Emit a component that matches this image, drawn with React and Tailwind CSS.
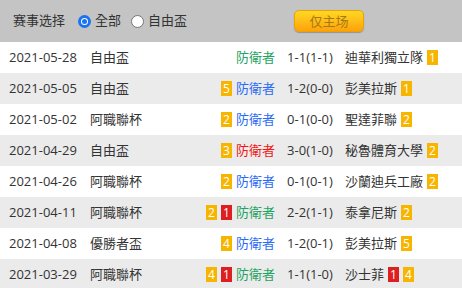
import React from 'react';

const rows = [
  { date: '2021-05-28', cup: '自由盃', hb: [], hc: 'text-[#1fa463]', score: '1-1(1-1)', away: '迪華利獨立隊', ab: [['y', '1']] },
  { date: '2021-05-05', cup: '自由盃', hb: [['y', '5']], hc: 'text-[#2b6cf5]', score: '1-2(0-0)', away: '彭美拉斯', ab: [['y', '1']] },
  { date: '2021-05-02', cup: '阿職聯杯', hb: [['y', '2']], hc: 'text-[#2b6cf5]', score: '0-1(0-0)', away: '聖達菲聯', ab: [['y', '2']] },
  { date: '2021-04-29', cup: '自由盃', hb: [['y', '3']], hc: 'text-[#f01818]', score: '3-0(1-0)', away: '秘魯體育大學', ab: [['y', '2']] },
  { date: '2021-04-26', cup: '阿職聯杯', hb: [['y', '2']], hc: 'text-[#2b6cf5]', score: '0-1(0-1)', away: '沙蘭迪兵工廠', ab: [['y', '2']] },
  { date: '2021-04-11', cup: '阿職聯杯', hb: [['y', '2'], ['r', '1']], hc: 'text-[#1fa463]', score: '2-2(1-1)', away: '泰拿尼斯', ab: [['y', '2']] },
  { date: '2021-04-08', cup: '優勝者盃', hb: [['y', '4']], hc: 'text-[#2b6cf5]', score: '1-2(0-1)', away: '彭美拉斯', ab: [['y', '5']] },
  { date: '2021-03-29', cup: '阿職聯杯', hb: [['y', '4'], ['r', '1']], hc: 'text-[#1fa463]', score: '1-1(1-0)', away: '沙士菲', ab: [['r', '1'], ['y', '4']] },
];

const Badge = ({ kind, n }) => (
  <span
    className={
      'inline-flex items-center justify-center w-[11px] h-[15px] text-[12px] leading-none text-white ' +
      (kind === 'r' ? 'bg-[#de1f1f]' : 'bg-[#f8b500]')
    }
  >
    {n}
  </span>
);

const Radio = ({ checked }) =>
  checked ? (
    <span className="w-[13px] h-[13px] rounded-full bg-[#1a73f0] flex items-center justify-center">
      <span className="w-[7px] h-[7px] rounded-full bg-white flex items-center justify-center">
        <span className="w-[5px] h-[5px] rounded-full bg-[#1a73f0]" />
      </span>
    </span>
  ) : (
    <span className="w-[13px] h-[13px] rounded-full bg-white border border-[#767676]" />
  );

export default function App() {
  return (
    <div className="w-[462px] h-[288px] overflow-hidden bg-white text-[13px] text-[#333] font-['Open_Sans','Noto_Sans_CJK_TC',sans-serif]">
      {/* filter bar */}
      <div className="h-[42px] bg-[#c4c4c4] flex items-center pl-[13px]">
        <span>赛事选择</span>
        <label className="flex items-center ml-[13px] gap-[4px]">
          <Radio checked />
          <span>全部</span>
        </label>
        <label className="flex items-center ml-[10px] gap-[4px]">
          <Radio />
          <span>自由盃</span>
        </label>
        <button className="ml-[107px] w-[70px] h-[22px] rounded-[5px] border border-[#eaa300] bg-gradient-to-b from-[#ffd823] to-[#ffa10a] text-[#a57a12] text-[13px] leading-none shadow-[0_1px_1px_rgba(0,0,0,0.25)]">
          仅主场
        </button>
      </div>

      {/* match list */}
      {rows.map((r, i) => (
        <div key={i} className={'h-[31px] flex items-center ' + (i % 2 ? 'bg-[#ebebeb]' : 'bg-white')}>
          <span className="ml-[9px] w-[81px]">{r.date}</span>
          <span>{r.cup}</span>
          <div className="flex-1 flex items-center justify-end gap-[4px]">
            {r.hb.map((b, j) => (
              <Badge key={j} kind={b[0]} n={b[1]} />
            ))}
            <span className={r.hc}>防衛者</span>
          </div>
          <span className="w-[70px] text-center">{r.score}</span>
          <div className="w-[117px] flex items-center gap-[4px]">
            <span>{r.away}</span>
            {r.ab.map((b, j) => (
              <Badge key={j} kind={b[0]} n={b[1]} />
            ))}
          </div>
        </div>
      ))}
    </div>
  );
}
